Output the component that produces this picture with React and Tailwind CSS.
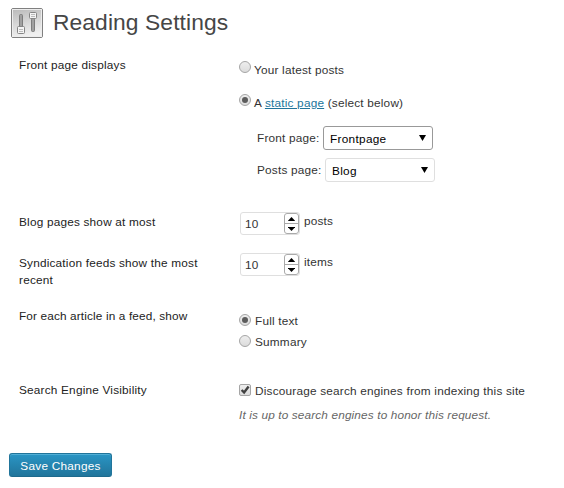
import React from 'react';

function Radio({ checked }) {
  return (
    <span className="flex h-3 w-3 shrink-0 items-center justify-center rounded-full border border-[#a5a5a5] bg-gradient-to-b from-[#eeeeee] to-[#dcdcdc]">
      {checked && <span className="h-1.5 w-1.5 rounded-full bg-[#5c5c5c]" />}
    </span>
  );
}

function Checkbox() {
  return (
    <span className="flex h-3 w-3 shrink-0 rounded-[2px] border border-[#a5a5a5] bg-gradient-to-b from-[#eeeeee] to-[#dcdcdc]">
      <svg width="10" height="10" viewBox="0 0 10 10" fill="none">
        <path d="M1.6 5L4.1 7.4L8.6 1.6" stroke="#404040" strokeWidth="2.4" />
      </svg>
    </span>
  );
}

function Select({ value, active }) {
  return (
    <div
      className={`flex h-6 w-[110px] items-center justify-between rounded-[3px] border bg-white px-1.5 pt-px text-black ${
        active ? 'border-[#999999]' : 'border-[#dfdfdf]'
      }`}
    >
      <span className="tracking-[0.3px]">{value}</span>
      <svg className="-mt-0.5" width="7" height="6" viewBox="0 0 7 6">
        <path d="M0 0H7L3.5 6Z" fill="#000" />
      </svg>
    </div>
  );
}

function NumberInput({ value }) {
  return (
    <div className="flex h-[23px] w-[60px] justify-between rounded-[3px] border border-[#dfdfdf] bg-white pl-1">
      <span className="pt-[3px]">{value}</span>
      <div className="flex h-[21px] w-[15px] flex-col rounded-[3px] border border-[#aaaaaa]">
        <span className="flex h-[10px] items-center justify-center border-b border-[#aaaaaa]">
          <svg width="7" height="4" viewBox="0 0 7 4">
            <path d="M3.5 0L7.3 4H-0.3Z" fill="#000" />
          </svg>
        </span>
        <span className="flex h-[9px] items-center justify-center">
          <svg width="7" height="4" viewBox="0 0 7 4">
            <path d="M-0.3 0H7.3L3.5 4Z" fill="#000" />
          </svg>
        </span>
      </div>
    </div>
  );
}

function SettingsIcon() {
  return (
    <svg width="34" height="32" viewBox="0 0 34 32" fill="none">
      <defs>
        <linearGradient id="panel" x1="0" y1="0" x2="0.25" y2="1">
          <stop offset="0" stopColor="#b8b8b8" />
          <stop offset="1" stopColor="#f0f0f0" />
        </linearGradient>
      </defs>
      <rect x="1.5" y="1.5" width="31" height="29" rx="1.5" fill="url(#panel)" stroke="#808080" />
      <rect x="2.5" y="2.5" width="29" height="27" stroke="#ededed" />
      <rect x="9.5" y="7.5" width="3" height="13" rx="1" fill="#a0a0a0" stroke="#7c7c7c" />
      <rect x="21.5" y="11.5" width="3" height="13" rx="1" fill="#a0a0a0" stroke="#7c7c7c" />
      <rect x="7.5" y="19.5" width="7" height="7" rx="1" fill="#f4f4f4" stroke="#858585" />
      <path d="M9 22.5H13M9 24.5H13" stroke="#bbb" />
      <rect x="19.5" y="5.5" width="7" height="6" rx="1" fill="#f4f4f4" stroke="#858585" />
      <path d="M21 7.5H25M21 9.5H25" stroke="#bbb" />
    </svg>
  );
}

function Row({ label, className, children }) {
  return (
    <div className={`flex ${className}`}>
      <div className="w-[220px] shrink-0 leading-[17px] text-[#222222]">{label}</div>
      <div className="text-[#333333]">{children}</div>
    </div>
  );
}

export default function App() {
  return (
    <main className="h-[488px] w-[564px] overflow-hidden bg-white font-['Liberation_Sans',Arial,sans-serif] text-[11.8px] leading-4 tracking-[0.2px]">
      <header className="flex h-[57px] pt-[7px] pl-[10px]">
        <SettingsIcon />
        <h1 className="ml-[9px] text-[22.8px] leading-[31px] tracking-[0.1px] whitespace-nowrap text-[#464646]">
          Reading Settings
        </h1>
      </header>

      <div className="pl-[19px]">
        <Row className="h-[157px]" label="Front page displays">
          <label className="flex h-[33px] gap-[3px] pt-1">
            <Radio />
            <span className="pt-px">Your latest posts</span>
          </label>
          <label className="flex h-9 gap-[3px] pt-1">
            <Radio checked />
            <span className="pt-px">
              A <a className="text-[#21759b] underline">static page</a> (select below)
            </span>
          </label>
          <div className="flex h-8 pl-[18px]">
            <span className="w-[66px] pt-1">Front page:</span>
            <Select value="Frontpage" active />
          </div>
          <div className="flex h-8 pl-[18px]">
            <span className="w-[68px] pt-1">Posts page:</span>
            <Select value="Blog" />
          </div>
        </Row>

        <Row className="h-[41px]" label="Blog pages show at most">
          <div className="-mt-0.5 flex gap-1 pl-px">
            <NumberInput value="10" />
            <span className="pt-px">posts</span>
          </div>
        </Row>

        <Row
          className="h-[53px]"
          label={
            <>
              Syndication feeds show the most
              <br />
              recent
            </>
          }
        >
          <div className="-mt-0.5 flex gap-1 pl-px">
            <NumberInput value="10" />
            <span className="pt-px">items</span>
          </div>
        </Row>

        <Row className="h-[74px]" label={<span className="tracking-[0.14px]">For each article in a feed, show</span>}>
          <label className="flex h-[27px] gap-1 pt-[6px]">
            <Radio checked />
            <span className="-mt-px">Full text</span>
          </label>
          <label className="flex gap-1">
            <Radio />
            <span className="-mt-px">Summary</span>
          </label>
        </Row>

        <Row className="h-[71px]" label="Search Engine Visibility">
          <label className="flex h-[25px] gap-1 pt-0.5">
            <Checkbox />
            <span className="-mt-px">Discourage search engines from indexing this site</span>
          </label>
          <p className="tracking-[0.14px] text-[#666666] italic">It is up to search engines to honor this request.</p>
        </Row>
      </div>

      <button className="ml-[9px] block h-6 w-[103px] rounded-[3px] border border-[#21759b] border-b-[#1e6a8d] bg-gradient-to-b from-[#2a95c5] to-[#21759b] pt-px text-[11.8px] leading-[22px] tracking-[0.24px] whitespace-nowrap text-white shadow-[inset_0_1px_0_rgba(120,200,230,0.5)]">
        Save Changes
      </button>
    </main>
  );
}
